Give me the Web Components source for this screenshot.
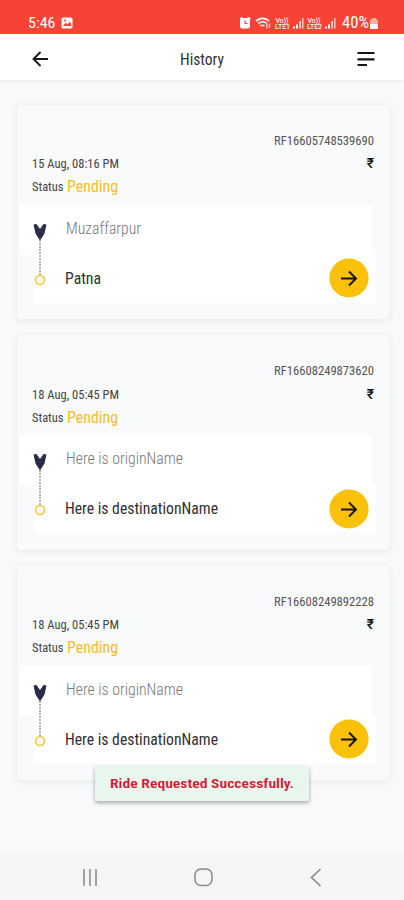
<!DOCTYPE html>
<html lang="en"><head><meta charset="utf-8"><title>History</title>
<style>body{margin:0;background:#f8f9fb;font-family:Roboto,"Liberation Sans",sans-serif;color:#333}</style></head>
<body><ride-app></ride-app>
<script>
// Text drawn at a fixed width; the glyphs are condensed to fill it.
class FitText extends HTMLElement{
  connectedCallback(){
    const w=+this.getAttribute('w'),s=+this.getAttribute('size');
    this.attachShadow({mode:'open'}).innerHTML=`<style>:host{display:block;flex:none;width:${w}px;height:20px;line-height:20px;font-size:${s}px;white-space:nowrap}span{display:inline-block;transform-origin:0 0;font-stretch:75%}</style><span></span>`;
    const t=this.shadowRoot.querySelector('span');t.textContent=this.getAttribute('text');
    t.style.transform=`scaleX(${w/t.getBoundingClientRect().width})`;
  }
}
customElements.define('fit-text',FitText);
const define=(name,html)=>customElements.define(name,class extends HTMLElement{
  connectedCallback(){this.attachShadow({mode:'open'}).innerHTML=html(this)}
});
define('status-bar',()=>`<style>:host{display:flex;box-sizing:border-box;height:33.5px;padding:13px 26px 0 28px;background:#f74335;color:#fff;justify-content:space-between}
div{display:flex}svg{display:block}.l{gap:5px}.r{gap:2px}</style>
<div class="l"><fit-text w="27.5" size="15.5" text="5:46"></fit-text>
<svg width="12" height="20"><rect x=".5" y="4.500" width="11" height="11" rx="1.5" fill="#fff"/><path d="M2 13 4.500 9.500l2 2L9 8.500l1.500 4.500z" fill="#f74335"/><circle cx="4" cy="7.500" r="1" fill="#f74335"/></svg></div>
<div class="r"><svg width="100" height="20" fill="none" stroke="#fff">
<path d="M-.5 6 2.500 4.500M7.500 4.500l3 1.500" stroke-width="1.500"/><rect x="0" y="5" width="10" height="10.500" rx="2" fill="#fff" stroke="none"/><path d="M5 7.500v3h2.500" stroke="#f74335" stroke-width="1.200"/>
<g opacity=".9"><path d="M16 8q6.500-5.500 13 0M18 10.500q4.500-3.500 9 0M20.500 13q2-1.500 4 0" stroke-width="1.700"/><path d="M27 11v4.500M29.500 10.500V15" stroke-width="1.200"/></g>
<g fill="#fff" stroke="none"><path d="M53 15.500v-2h2v2zM56 15.500v-4h2v4z"/><path d="M59 15.500V8h2v7.500zM62 15.500V5h1.500v10.500z" opacity=".7"/></g>
<g transform="translate(32 0)" fill="#fff" stroke="none"><path d="M53 15.500v-2h2v2zM56 15.500v-4h2v4z"/><path d="M59 15.500V8h2v7.500zM62 15.500V5h1.500v10.500z" opacity=".7"/></g>
<g fill="#fff" stroke="none" font-family="Roboto,sans-serif" font-size="7" font-weight="500" opacity=".95"><text x="35.500" y="9.500" textLength="13">Vo))</text><text x="35" y="16" textLength="15" lengthAdjust="spacingAndGlyphs">LTE1</text><text x="67.500" y="9.500" textLength="13">Vo))</text><text x="67" y="16" textLength="15" lengthAdjust="spacingAndGlyphs">LTE2</text></g>
</svg><fit-text w="27" size="16" text="40%"></fit-text>
<svg width="8" height="20" style="margin-left:-1px"><path d="M2 6V5h4v1q2 0 2 2v7q0 1-1 1H1q-1 0-1-1V8q0-2 2-2z" fill="#ffaaa2"/><path d="M0 11h8v4q0 1-1 1H1q-1 0-1-1z" fill="#fff"/></svg></div>`);
define('top-bar',()=>`<style>:host{display:flex;box-sizing:border-box;height:47.500px;padding:0 29px 0 30.500px;background:#fff;align-items:center;justify-content:space-between;border-bottom:1px solid #eceef1;box-shadow:0 1px 2px #0000000a}svg{display:block}fit-text{margin:6px 2px 0 0;color:#333}</style>
<svg width="18" height="18" fill="none" stroke="#161616" stroke-width="1.900" style="margin-top:4px"><path d="M9.500 2 2.500 9l7 7M2.500 9H17"/></svg>
<fit-text w="44" size="16" text="History"></fit-text>
<svg width="18" height="18" stroke="#161616" stroke-width="2.200" style="margin-top:4px"><path d="M.5 3h17M.5 9.300h17M.5 15h9.500"/></svg>`);
define('ride-card',e=>{const a=n=>e.getAttribute(n);return `<style>:host{display:block;box-sizing:border-box;height:214.500px;background:#f9fafc;border-radius:4px;box-shadow:0 1px 6px 1px #20304014;padding-top:26px}
.row{display:flex;padding:0 15px;justify-content:space-between;height:20px}.id{justify-content:flex-end;color:#555}
.date{margin-top:3.500px;color:#444}.price{color:#111;font:500 14px/20px Roboto,"Noto Sans",sans-serif;margin-top:-1px}
.state{justify-content:flex-start;gap:3px;margin-top:3px;color:#444}.state fit-text+fit-text{color:#f8bd25}
.trip{display:grid;grid-template-columns:17px 1fr;margin-top:7.500px;height:98px;background:linear-gradient(#fff,#fff) 3px 0/352px 50px no-repeat,linear-gradient(#fff,#fff) 17px 49px/342px 49px no-repeat}
.trip>svg{grid-column:1;margin-left:15px;overflow:visible}.names{padding:14px 0 0 31px}.from{color:#777;margin-left:1px;font-weight:300}.dest{display:flex;justify-content:space-between;align-items:center;height:40px;margin-top:19.500px;padding-right:20px;color:#303030}.dest fit-text{margin-top:1px}.dest>svg{display:block;flex:none}</style>
<div class="row id"><fit-text w="100" size="12" text="${a('ride')}"></fit-text></div>
<div class="row date"><fit-text w="87" size="12.3" text="${a('date')}"></fit-text><span class="price">₹</span></div>
<div class="row state"><fit-text w="31.500" size="12" text="Status"></fit-text><fit-text w="51" size="16.500" text="Pending"></fit-text></div>
<div class="trip"><svg width="16" height="98"><path d="M8 35V70" stroke="#666" stroke-dasharray="2 1"/><path d="M1.500 19.500 4.500 19 8 24 11.500 19 14.500 19.500 12.500 28.500 8 35.500 3.500 28.500z" fill="#292b49"/><circle cx="8" cy="75" r="4.500" fill="#fff" stroke="#fac63c" stroke-width="1.700"/></svg>
<div class="names"><fit-text class="from" w="${a('fw')}" size="16.500" text="${a('from')}"></fit-text><div class="dest"><fit-text w="${a('tw')}" size="16.500" text="${a('to')}"></fit-text>
<svg width="40" height="40"><circle cx="20" cy="20" r="19.600" fill="#fbc108"/><path d="M12 20.500h15M20 13.500l7 7-7 7" fill="none" stroke="#181408" stroke-width="1.900"/></svg></div></div></div>`});
define('toast-message',()=>`<style>:host{display:flex;box-sizing:border-box;width:214px;height:35px;justify-content:center;padding-top:8px;background:#e8f6ee;border-radius:2px;box-shadow:0 2px 4px #0005;color:#cf2036;font-weight:600}</style><fit-text w="184" size="13" text="Ride Requested Successfully."></fit-text>`);
define('nav-bar',()=>`<style>:host{display:flex;box-sizing:border-box;height:46px;padding:13px 81px 0;justify-content:space-between;background:#f5f5f5}</style>
<svg width="18" height="20" stroke="#888" stroke-width="1.500"><path d="M3 2v17M9 2v17M15 2v17"/></svg>
<svg width="20" height="20" fill="none" stroke="#888" stroke-width="1.500"><rect x="2" y="2" width="17" height="16.500" rx="6"/></svg>
<svg width="18" height="20" fill="none" stroke="#888" stroke-width="1.600" style="margin-right:-2px"><path d="M13.500 2 4.500 10.500l9 8.500"/></svg>`);
define('ride-app',()=>`<style>:host{display:flex;flex-direction:column;width:404px;height:900px;position:relative;overflow:hidden;background:#f8f9fb}main{flex:1;display:flex;flex-direction:column;gap:16px;padding:23.500px 15px 0 17px}toast-message{position:absolute;left:95px;top:766px}</style>
<status-bar></status-bar><top-bar></top-bar><main>
<ride-card ride="RF16605748539690" date="15 Aug, 08:16 PM" from="Muzaffarpur" fw="75" to="Patna" tw="36"></ride-card>
<ride-card ride="RF16608249873620" date="18 Aug, 05:45 PM" from="Here is originName" fw="117" to="Here is destinationName" tw="153"></ride-card>
<ride-card ride="RF16608249892228" date="18 Aug, 05:45 PM" from="Here is originName" fw="117" to="Here is destinationName" tw="153"></ride-card>
</main><nav-bar></nav-bar><toast-message></toast-message>`);
</script></body></html>
